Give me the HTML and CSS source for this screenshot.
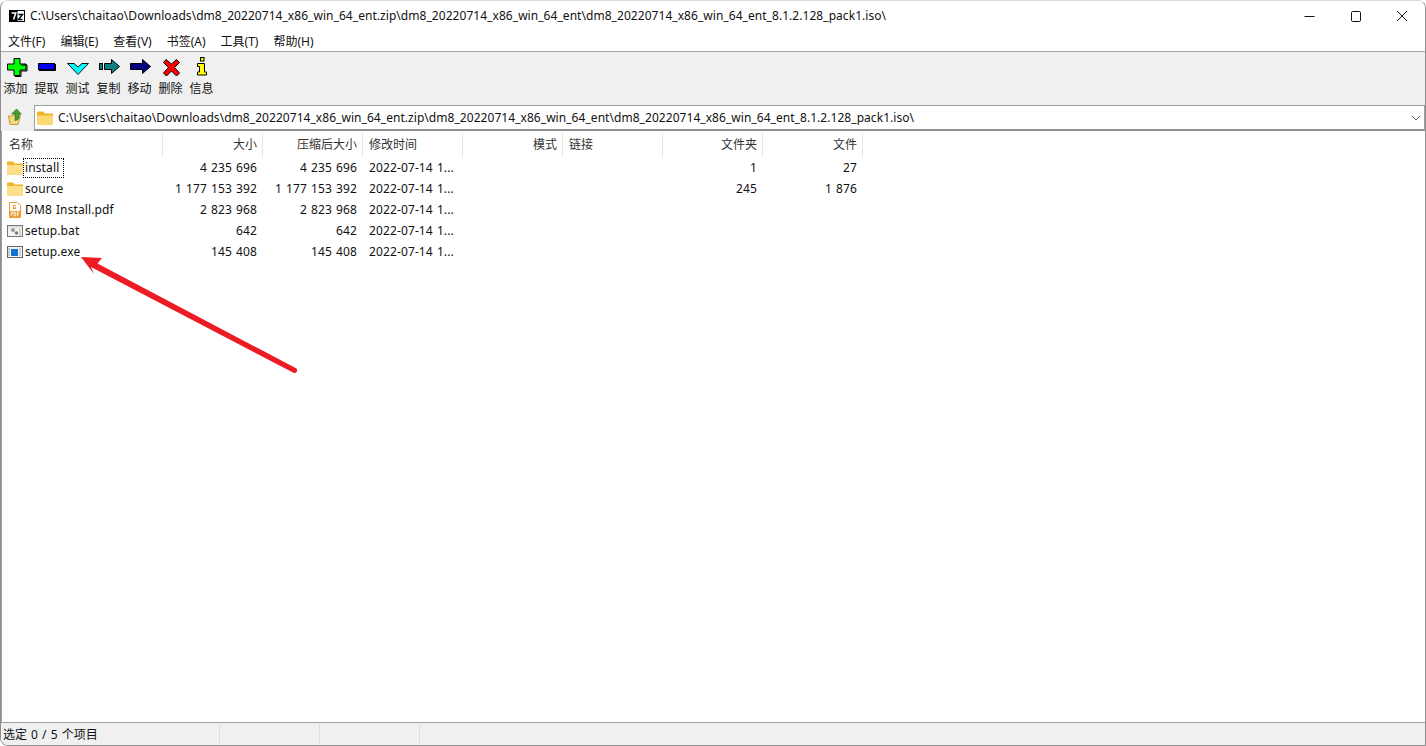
FILE: index.html
```html
<!DOCTYPE html>
<html lang="zh">
<head>
<meta charset="utf-8">
<title>7-Zip</title>
<link rel="stylesheet" href="styles.css">
</head>
<body>
<div class="window">
  <header class="titlebar">
    <svg class="app-icon" width="16" height="16" viewBox="0 0 16 16"><rect x="0.5" y="2.500" width="15" height="11" fill="#fff" stroke="#000"/><rect x="1" y="3" width="7.500" height="10" fill="#000"/><path d="M2.500 5H6.800L4.500 11.500" fill="none" stroke="#fff" stroke-width="1.500"/><path d="M9.500 6.500H13.500L9.500 11.500H13.500" fill="none" stroke="#000" stroke-width="1.400"/></svg>
    <span class="title">C:\Users\chaitao\Downloads\dm8_20220714_x86_win_64_ent.zip\dm8_20220714_x86_win_64_ent\dm8_20220714_x86_win_64_ent_8.1.2.128_pack1.iso\</span>
    <div class="win-buttons">
      <svg width="46" height="30" viewBox="0 0 46 30"><path d="M17.500 15.500H27.500" stroke="#111" fill="none"/></svg>
      <svg width="46" height="30" viewBox="0 0 46 30"><rect x="18.500" y="10.500" width="9" height="10" rx="1.200" stroke="#111" fill="none"/></svg>
      <svg width="46" height="30" viewBox="0 0 46 30"><path d="M18 10L28 20M28 10L18 20" stroke="#111" fill="none"/></svg>
    </div>
  </header>
  <nav class="menubar">
    <span class="menu-item">文件(F)</span><span class="menu-item">编辑(E)</span><span class="menu-item">查看(V)</span><span class="menu-item">书签(A)</span><span class="menu-item">工具(T)</span><span class="menu-item">帮助(H)</span>
  </nav>
  <div class="toolbar">
    <div class="tool"><svg width="24" height="24" viewBox="0 0 24 24"><path d="M10 3.500H16V9H22V15H16V20.500H10V15H3.500V9H10Z" fill="#0f0" stroke="#000"/><path d="M17 10H23V16H17V21.500H11" fill="none" stroke="#000"/></svg><span>添加</span></div>
    <div class="tool"><svg width="24" height="24" viewBox="0 0 24 24"><rect x="3.500" y="8.500" width="16" height="6" fill="#00f" stroke="#000"/><path d="M4 15.500H20.500V9" fill="none" stroke="#000"/></svg><span>提取</span></div>
    <div class="tool"><svg width="24" height="24" viewBox="0 0 24 24"><path d="M1.500 8.500H8L12 12L16 8.500H22.500L12 19.500Z" fill="#0ff" stroke="#111"/></svg><span>测试</span></div>
    <div class="tool"><svg width="24" height="24" viewBox="0 0 24 24"><rect x="2.500" y="8.500" width="3" height="6" fill="#088080" stroke="#000"/><path d="M7.500 8.500H14.500V4.500L22.500 11.500L14.500 18.500V14.500H7.500Z" fill="#088080" stroke="#000"/></svg><span>复制</span></div>
    <div class="tool"><svg width="24" height="24" viewBox="0 0 24 24"><path d="M2.500 8.500H14.500V4.500L22.500 11.500L14.500 18.500V14.500H2.500Z" fill="#000080" stroke="#000"/></svg><span>移动</span></div>
    <div class="tool"><svg width="24" height="24" viewBox="0 0 24 24"><path d="M7 4.500L12.500 9L17.500 4.500L20.500 7.500L15.500 12.500L20.500 18L17.500 21L12.500 16L7.500 21L4.500 18L9.500 12.500L4.500 7.500Z" fill="#f00" stroke="#000"/></svg><span>删除</span></div>
    <div class="tool"><svg width="24" height="24" viewBox="0 0 24 24"><rect x="10.500" y="2.500" width="3.500" height="3.500" fill="#ff0" stroke="#000"/><path d="M7.500 8.500H14.500V17H16.500V20H7.500V17H9.500V11.500H7.500Z" fill="#ff0" stroke="#000"/></svg><span>信息</span></div>
  </div>
  <div class="addressbar">
    <div class="up-button"><svg width="18" height="18" viewBox="0 0 18 18"><path d="M2.500 8H6L7 7H14.500L12 16.500H4Z" fill="#f5d97a" stroke="#c39a3a"/><path d="M10.500 1L15.300 6H13V9.500C13 11 11.500 12 9 12.500C9.500 11 9 9 9 6H5.700Z" fill="#45a02a" stroke="#2c6b1a" stroke-width="0.700"/></svg></div>
    <div class="combo">
      <svg class="folder" width="16" height="16" viewBox="0 0 16 16"><path d="M0 3C0 2 .6 1.500 1.500 1.500H6L8 3.500H16V14.500H1.500C.6 14.500 0 14 0 13Z" fill="#f0b429"/><path d="M0 5.500H16V13.500C16 14.300 15.500 14.800 14.500 14.800H1.500C.6 14.800 0 14.300 0 13.500Z" fill="#fcd873"/></svg>
      <span class="path">C:\Users\chaitao\Downloads\dm8_20220714_x86_win_64_ent.zip\dm8_20220714_x86_win_64_ent\dm8_20220714_x86_win_64_ent_8.1.2.128_pack1.iso\</span>
      <svg class="chevron" width="10" height="6" viewBox="0 0 10 6"><path d="M1 1L5 5L9 1" fill="none" stroke="#666"/></svg>
    </div>
  </div>
  <main class="list">
    <div class="row head">
      <div class="cell name">名称</div><div class="cell">大小</div><div class="cell">压缩后大小</div><div class="cell left">修改时间</div><div class="cell">模式</div><div class="cell left">链接</div><div class="cell">文件夹</div><div class="cell">文件</div>
    </div>
    <div class="row">
      <div class="cell name"><svg class="ficon" width="16" height="16" viewBox="0 0 16 16"><path d="M0 2.500C0 2 .5 1.500 1 1.500H6L8 3.500H16V14.500H0Z" fill="#f0b429"/><path d="M0 5H16V14.500H0Z" fill="#fcdf8a"/></svg><span class="focus">install</span></div><div class="cell">4 235 696</div><div class="cell">4 235 696</div><div class="cell left">2022-07-14 1...</div><div class="cell"></div><div class="cell"></div><div class="cell">1</div><div class="cell">27</div>
    </div>
    <div class="row">
      <div class="cell name"><svg class="ficon" width="16" height="16" viewBox="0 0 16 16"><path d="M0 2.500C0 2 .5 1.500 1 1.500H6L8 3.500H16V14.500H0Z" fill="#f0b429"/><path d="M0 5H16V14.500H0Z" fill="#fcdf8a"/></svg><span class="fname">source</span></div><div class="cell">1 177 153 392</div><div class="cell">1 177 153 392</div><div class="cell left">2022-07-14 1...</div><div class="cell"></div><div class="cell"></div><div class="cell">245</div><div class="cell">1 876</div>
    </div>
    <div class="row">
      <div class="cell name"><svg class="ficon" width="16" height="16" viewBox="0 0 16 16"><path d="M2.500 .500H10.500L13.500 3.500V15.500H2.500Z" fill="#fff" stroke="#f09a36"/><path d="M6 3H9V4H7V6H8V5H9V7H6Z" fill="#f09a36"/><rect x="3" y="9" width="10" height="6" fill="#f09a36"/><path d="M4 10H5.500V11.500H4V14M7 10V14H8C9 14 9 10 8 10ZM12 10H10.500V14M10.500 12H12" fill="none" stroke="#fff" stroke-width="0.800"/></svg><span class="fname">DM8 Install.pdf</span></div><div class="cell">2 823 968</div><div class="cell">2 823 968</div><div class="cell left">2022-07-14 1...</div><div class="cell"></div><div class="cell"></div><div class="cell"></div><div class="cell"></div>
    </div>
    <div class="row">
      <div class="cell name"><svg class="ficon" width="16" height="16" viewBox="0 0 16 16"><rect x=".5" y="2.500" width="15" height="11" fill="#f2f2f2" stroke="#777"/><path d="M1 3H15V4.500H1Z" fill="#ddd"/><circle cx="6" cy="7" r="2" fill="#9a9a9a"/><circle cx="9.500" cy="10" r="1.700" fill="#777"/><path d="M13 5V13" stroke="#bbb"/></svg><span class="fname">setup.bat</span></div><div class="cell">642</div><div class="cell">642</div><div class="cell left">2022-07-14 1...</div><div class="cell"></div><div class="cell"></div><div class="cell"></div><div class="cell"></div>
    </div>
    <div class="row">
      <div class="cell name"><svg class="ficon" width="16" height="16" viewBox="0 0 16 16"><rect x=".5" y="2.500" width="15" height="11" fill="#f4f4f4" stroke="#666"/><rect x="4" y="5" width="7" height="7" fill="#0c74d0"/><path d="M2 4V12M13 4V12" stroke="#aaa"/></svg><span class="fname">setup.exe</span></div><div class="cell">145 408</div><div class="cell">145 408</div><div class="cell left">2022-07-14 1...</div><div class="cell"></div><div class="cell"></div><div class="cell"></div><div class="cell"></div>
    </div>
    <svg class="annotation" width="225" height="125" viewBox="0 0 225 125"><path d="M1 1L22 2L17.500 7.500L216.500 112.500Q218 115 216 116.500Q214.500 117.500 213 116.500L11 11L14 18Z" fill="#ed1c24"/></svg>
  </main>
  <footer class="statusbar">
    <div class="status">选定 0 / 5 个项目</div><div class="status"></div><div class="status"></div><div class="status"></div>
  </footer>
</div>
</body>
</html>
```
FILE: styles.css
```css
* { box-sizing: border-box; }
html, body { margin: 0; height: 100%; overflow: hidden; background: #fff; }
body { font: 12px/16px "Noto Sans", "Noto Sans CJK SC", sans-serif; color: #111; }
svg { display: block; flex: none; }
.window { display: flex; flex-direction: column; height: 746px; border: 1px solid #8d8d8d; border-top-color: #d9d9d9; border-radius: 8px 8px 0 8px; overflow: hidden; position: relative; }
.titlebar { height: 29px; display: flex; align-items: center; padding-left: 8px; background: #fff; }
.title { margin-left: 5px; white-space: nowrap; letter-spacing: .05px; }
.win-buttons { display: flex; margin-left: auto; }
.menubar { height: 22px; display: flex; padding: 2px 0 0 7px; gap: 15px; align-items: center; background: #fff; border-bottom: 1px solid #a6a6a6; }
.menu-item { white-space: nowrap; }
.toolbar { height: 50px; display: flex; padding-top: 3px; margin-left: -1px; background: #f0f0f0; }
.tool { width: 31px; display: flex; flex-direction: column; align-items: center; }
.tool svg { margin-bottom: 2px; }
.tool span { white-space: nowrap; }
.addressbar { height: 29px; display: flex; background: #f0f0f0; }
.up-button { width: 33px; padding: 6px 0 0 5px; }
.combo { flex: 1; margin-top: 3px; display: flex; align-items: center; background: #fff; border: 1px solid #a0a0a0; border-bottom: 2px solid #8f8f8f; padding-left: 2px; }
.folder { margin-right: 5px; }
.path { white-space: nowrap; letter-spacing: .05px; padding-top: 1px; }
.chevron { margin-left: auto; margin-right: 3px; }
.list { flex: 1; background: #fff; position: relative; min-height: 0; border-left: 1px solid #a0a0a0; letter-spacing: .12px; word-spacing: .8px; }
.row { display: grid; grid-template-columns: 161px repeat(7, 100px); height: 21px; align-items: center; }
.head { height: 26px; padding-top: 2px; letter-spacing: 0; word-spacing: 0; color: #333; }
.cell { padding: 0 6px 0 5px; white-space: nowrap; height: 100%; display: flex; align-items: center; justify-content: flex-end; }
.head .cell { border-right: 1px solid #e5e5e5; padding: 0 5px 1px; }
.cell.left, .head .cell.left { justify-content: flex-start; padding-left: 6px; }
.cell.name { justify-content: flex-start; padding: 0 0 0 5px; }
.head .cell.name { padding-left: 7px; }
.ficon { margin-right: 1px; }
.fname { padding-left: 1px; }
.focus { outline: 1px dotted #000; padding: 1px 4px 1px 1px; }
.annotation { position: absolute; left: 78px; top: 125px; }
.statusbar { height: 23px; display: grid; grid-template-columns: 219px 100px 100px 1fr; background: #f0f0f0; border-top: 1px solid #a0a0a0; word-spacing: 1px; }
.status { padding: 3px 0 0 2px; border-right: 1px solid #dcdcdc; margin: 1px 0; }
.status:last-child { border-right: 0; }
```
